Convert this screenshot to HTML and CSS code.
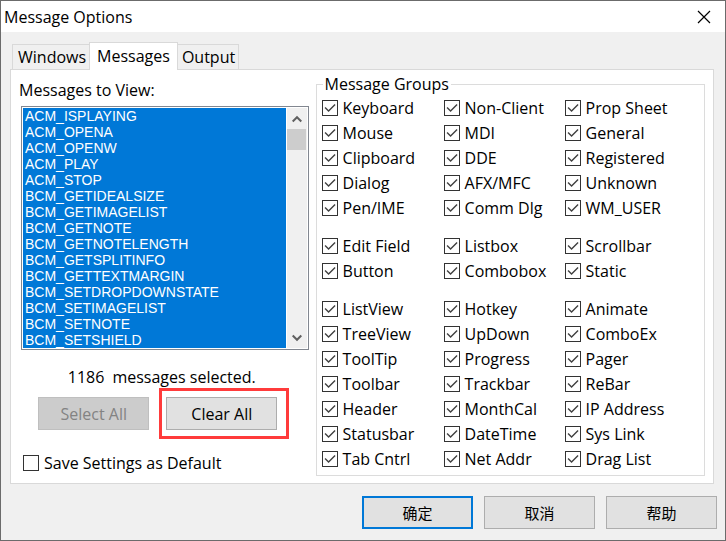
FILE: index.html
```html
<!DOCTYPE html>
<html lang="en">
<head>
<meta charset="utf-8">
<title>Message Options</title>
<link rel="stylesheet" href="styles.css">
</head>
<body>
<main class="dialog">
  <header class="titlebar">
    <h1 class="title">Message Options</h1>
    <button class="close" type="button" aria-label="Close">
      <svg width="14" height="14" viewBox="0 0 14 14"><path d="M1 1L13 13M13 1L1 13" fill="none" stroke="#000" stroke-width="1.2"/></svg>
    </button>
  </header>

  <div class="content">
    <div class="tabs" role="tablist">
      <button class="tab" type="button" role="tab">Windows</button>
      <button class="tab tab-active" type="button" role="tab" aria-selected="true">Messages</button>
      <button class="tab" type="button" role="tab">Output</button>
    </div>

    <section class="panel" role="tabpanel">
      <div class="view">
        <label class="view-label" for="messages">Messages to View:</label>
        <div class="listbox">
          <select class="list" id="messages" multiple size="15">
            <option selected>ACM_ISPLAYING</option>
            <option selected>ACM_OPENA</option>
            <option selected>ACM_OPENW</option>
            <option selected>ACM_PLAY</option>
            <option selected>ACM_STOP</option>
            <option selected>BCM_GETIDEALSIZE</option>
            <option selected>BCM_GETIMAGELIST</option>
            <option selected>BCM_GETNOTE</option>
            <option selected>BCM_GETNOTELENGTH</option>
            <option selected>BCM_GETSPLITINFO</option>
            <option selected>BCM_GETTEXTMARGIN</option>
            <option selected>BCM_SETDROPDOWNSTATE</option>
            <option selected>BCM_SETIMAGELIST</option>
            <option selected>BCM_SETNOTE</option>
            <option selected>BCM_SETSHIELD</option>
          </select>
          <div class="scrollbar">
            <button class="arrow" type="button" aria-label="Scroll up">
              <svg width="10" height="8" viewBox="0 0 10 8"><path d="M0.7 6.5L5 2.2L9.3 6.5" fill="none" stroke="#606060" stroke-width="2"/></svg>
            </button>
            <div class="thumb"></div>
            <button class="arrow arrow-down" type="button" aria-label="Scroll down">
              <svg width="10" height="8" viewBox="0 0 10 8"><path d="M0.7 1.5L5 5.8L9.3 1.5" fill="none" stroke="#606060" stroke-width="2"/></svg>
            </button>
          </div>
        </div>
        <p class="status"><span>1186</span><span>messages selected.</span></p>
        <div class="actions">
          <button class="button" type="button" disabled>Select All</button>
          <div class="marked"><button class="button" type="button">Clear All</button></div>
        </div>
        <label class="check"><input type="checkbox">Save Settings as Default</label>
      </div>

      <fieldset class="groups">
        <legend>Message Groups</legend>
        <div class="group">
          <label class="check"><input type="checkbox" checked>Keyboard</label>
          <label class="check"><input type="checkbox" checked>Non-Client</label>
          <label class="check"><input type="checkbox" checked>Prop Sheet</label>
          <label class="check"><input type="checkbox" checked>Mouse</label>
          <label class="check"><input type="checkbox" checked>MDI</label>
          <label class="check"><input type="checkbox" checked>General</label>
          <label class="check"><input type="checkbox" checked>Clipboard</label>
          <label class="check"><input type="checkbox" checked>DDE</label>
          <label class="check"><input type="checkbox" checked>Registered</label>
          <label class="check"><input type="checkbox" checked>Dialog</label>
          <label class="check"><input type="checkbox" checked>AFX/MFC</label>
          <label class="check"><input type="checkbox" checked>Unknown</label>
          <label class="check"><input type="checkbox" checked>Pen/IME</label>
          <label class="check"><input type="checkbox" checked>Comm Dlg</label>
          <label class="check"><input type="checkbox" checked>WM_USER</label>
        </div>
        <div class="group">
          <label class="check"><input type="checkbox" checked>Edit Field</label>
          <label class="check"><input type="checkbox" checked>Listbox</label>
          <label class="check"><input type="checkbox" checked>Scrollbar</label>
          <label class="check"><input type="checkbox" checked>Button</label>
          <label class="check"><input type="checkbox" checked>Combobox</label>
          <label class="check"><input type="checkbox" checked>Static</label>
        </div>
        <div class="group">
          <label class="check"><input type="checkbox" checked>ListView</label>
          <label class="check"><input type="checkbox" checked>Hotkey</label>
          <label class="check"><input type="checkbox" checked>Animate</label>
          <label class="check"><input type="checkbox" checked>TreeView</label>
          <label class="check"><input type="checkbox" checked>UpDown</label>
          <label class="check"><input type="checkbox" checked>ComboEx</label>
          <label class="check"><input type="checkbox" checked>ToolTip</label>
          <label class="check"><input type="checkbox" checked>Progress</label>
          <label class="check"><input type="checkbox" checked>Pager</label>
          <label class="check"><input type="checkbox" checked>Toolbar</label>
          <label class="check"><input type="checkbox" checked>Trackbar</label>
          <label class="check"><input type="checkbox" checked>ReBar</label>
          <label class="check"><input type="checkbox" checked>Header</label>
          <label class="check"><input type="checkbox" checked>MonthCal</label>
          <label class="check"><input type="checkbox" checked>IP Address</label>
          <label class="check"><input type="checkbox" checked>Statusbar</label>
          <label class="check"><input type="checkbox" checked>DateTime</label>
          <label class="check"><input type="checkbox" checked>Sys Link</label>
          <label class="check"><input type="checkbox" checked>Tab Cntrl</label>
          <label class="check"><input type="checkbox" checked>Net Addr</label>
          <label class="check"><input type="checkbox" checked>Drag List</label>
        </div>
      </fieldset>
    </section>
  </div>

  <footer class="footer">
    <button class="button button-default" type="button" lang="zh-CN">确定</button>
    <button class="button" type="button" lang="zh-CN">取消</button>
    <button class="button" type="button" lang="zh-CN">帮助</button>
  </footer>
</main>
</body>
</html>
```
FILE: styles.css
```css
* {
  box-sizing: border-box;
}

body {
  margin: 0;
  color: #000;
  font: 16px/24px "Open Sans", "Noto Sans CJK SC", sans-serif;
}

button {
  padding: 0;
  border: 0;
  background: none;
  color: inherit;
  font: inherit;
}

svg {
  display: block;
}

.dialog {
  display: flex;
  flex-direction: column;
  min-height: 100vh;
  border: 1px solid #6b6b6b;
  background: #f0f0f0;
}

.titlebar {
  display: flex;
  align-items: center;
  justify-content: space-between;
  height: 31px;
  padding: 0 14px 0 3px;
  background: #fff;
}

.title {
  margin: 0;
  font-size: 16px;
  font-weight: 400;
}

.content {
  padding: 10px 11px 0 9px;
}

.tabs {
  display: flex;
  align-items: flex-end;
  padding-left: 2px;
}

.tab {
  height: 25px;
  padding: 0 3px 0 5px;
  border: 1px solid #d9d9d9;
  border-bottom: 0;
}

.tab + .tab {
  padding-left: 4px;
  border-left: 0;
}

.tab + .tab-active {
  position: relative;
  height: 28px;
  margin: 0 0 -1px -1px;
  padding: 0 7px 2px;
  border-left: 1px solid #d9d9d9;
  background: #fff;
}

.panel {
  display: flex;
  justify-content: space-between;
  gap: 7px;
  padding: 3px 8px 7px 10px;
  border: 1px solid #d9d9d9;
  background: #fff;
}

.view {
  display: flex;
  flex: 0 1 288px;
  flex-direction: column;
  padding-top: 5px;
}

.view-label {
  margin-left: -2px;
}

.listbox {
  display: flex;
  margin-top: 4px;
  padding: 1px;
  border: 1px solid #828790;
}

.list {
  flex: 1;
  height: 240px;
  min-width: 0;
  margin: 0;
  padding: 0;
  overflow: hidden;
  border: 0;
  border-radius: 0;
  outline: 0;
  background: #0078d7;
  font: 14px/16px "Liberation Sans", Arial, sans-serif;
}

.list option {
  height: 16px;
  min-height: 16px;
  padding: 0 2px;
  line-height: 16px;
}

.list option:checked {
  background: #0078d7 linear-gradient(#0078d7, #0078d7);
  color: #fff;
  -webkit-text-fill-color: #fff;
}

.scrollbar {
  display: flex;
  flex: 0 0 20px;
  flex-direction: column;
  margin-left: 1px;
  background: #f0f0f0;
}

.arrow {
  display: grid;
  height: 21px;
  place-items: center;
}

.arrow-down {
  margin-top: auto;
}

.thumb {
  height: 21px;
  margin-right: 1px;
  background: #cdcdcd;
}

.status {
  display: flex;
  justify-content: center;
  gap: 8px;
  margin: 15px 0 8px;
  padding-right: 6px;
}

.actions {
  display: flex;
  justify-content: center;
  gap: 17px;
  margin-bottom: 21px;
  padding-right: 14px;
}

.button {
  width: 111px;
  height: 33px;
  border: 1px solid #adadad;
  background: #e1e1e1;
}

.button:disabled {
  border-color: #bfbfbf;
  background: #ccc;
  color: #838383;
}

.button-default {
  border: 2px solid #0078d7;
}

.marked {
  position: relative;
}

.marked::after {
  position: absolute;
  inset: -9px -12px -9px -7px;
  border: 3px solid #ff3b3b;
  content: "";
  pointer-events: none;
}

.check {
  display: flex;
  align-items: center;
  gap: 5px;
  white-space: nowrap;
}

.view .check {
  margin-left: 2px;
}

.check input {
  flex: none;
  width: 16px;
  height: 16px;
  margin: 0;
  border: 1px solid #333;
  appearance: none;
  background: #fff;
}

.check input:checked::before {
  display: block;
  width: 14px;
  height: 14px;
  background: #404040;
  clip-path: polygon(2px 7px, 3px 6px, 6px 9px, 12px 3px, 13px 4px, 6px 11px);
  content: "";
}

.groups {
  flex: 0 1 390px;
  min-width: 0;
  margin: 0;
  padding: 1px 5px 4px;
  border: 1px solid #dcdcdc;
}

.groups legend {
  margin-left: 1px;
  padding: 0 2px;
  line-height: 22px;
}

.group {
  display: grid;
  grid-template-columns: 122px 121px 1fr;
  row-gap: 1px;
}

.group + .group {
  margin-top: 14px;
}

.footer {
  display: flex;
  justify-content: flex-end;
  gap: 11px;
  padding: 12px 8px 10px;
}

.footer .button {
  font-size: 15px;
}
```
